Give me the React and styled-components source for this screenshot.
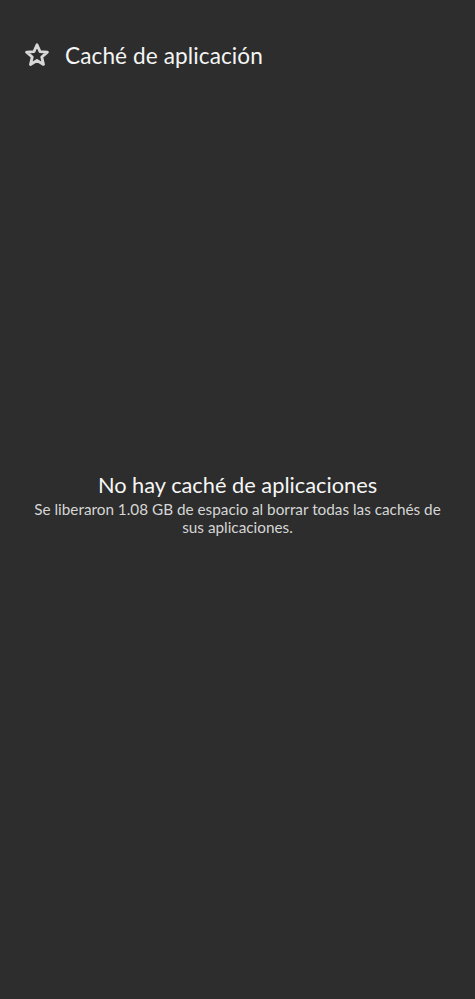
import React from 'react'
import styled, { createGlobalStyle } from 'styled-components'

const Global = createGlobalStyle`
	html, body {
		margin: 0;
		padding: 0;
		background: #2c2d2c;
	}
	body {
		font-family: Lato, 'Noto Sans', sans-serif;
		color: #f2f2f2;
	}
`

const Screen = styled.div`
	width: 475px;
	height: 999px;
	display: flex;
	flex-direction: column;
	background: #2c2d2c;
`

const Header = styled.header`
	display: flex;
	align-items: center;
	gap: 15px;
	padding: 41px 0 0 24px;
	height: 28px;

	svg {
		width: 26px;
		height: 26px;
		filter: blur(0.6px);
	}
`

const Title = styled.h1`
	margin: 0;
	font-size: 22.6px;
	font-weight: 400;
	letter-spacing: 0.1px;
	color: #f4f4f4;
`

const Empty = styled.div`
	display: flex;
	flex-direction: column;
	align-items: center;
	text-align: center;
	margin-top: 402px;
	padding: 0 20px;
`

const Heading = styled.h2`
	margin: 0;
	font-size: 21.8px;
	font-weight: 400;
	line-height: 28px;
	color: #f6f6f6;
`

const Body = styled.p`
	margin: 1px 0 0;
	font-size: 15.3px;
	line-height: 18px;
	color: #d6d6d6;
`

const StarIcon = () => (
	<svg viewBox='0 0 24 24' fill='none' stroke='#d8d8d8' strokeWidth='2.6' strokeLinejoin='round'>
		<polygon points='12,2.5 14.8,8.9 21.6,9.4 16.4,13.9 18,20.7 12,17.1 6,20.7 7.6,13.9 2.4,9.4 9.2,8.9' />
	</svg>
)

const App = () => {
	return (
		<>
			<Global />
			<Screen>
				<Header>
					<StarIcon />
					<Title>Caché de aplicación</Title>
				</Header>
				<Empty>
					<Heading>No hay caché de aplicaciones</Heading>
					<Body>
						Se liberaron 1.08 GB de espacio al borrar todas las cachés de
						<br />
						sus aplicaciones.
					</Body>
				</Empty>
			</Screen>
		</>
	)
}

export default App
